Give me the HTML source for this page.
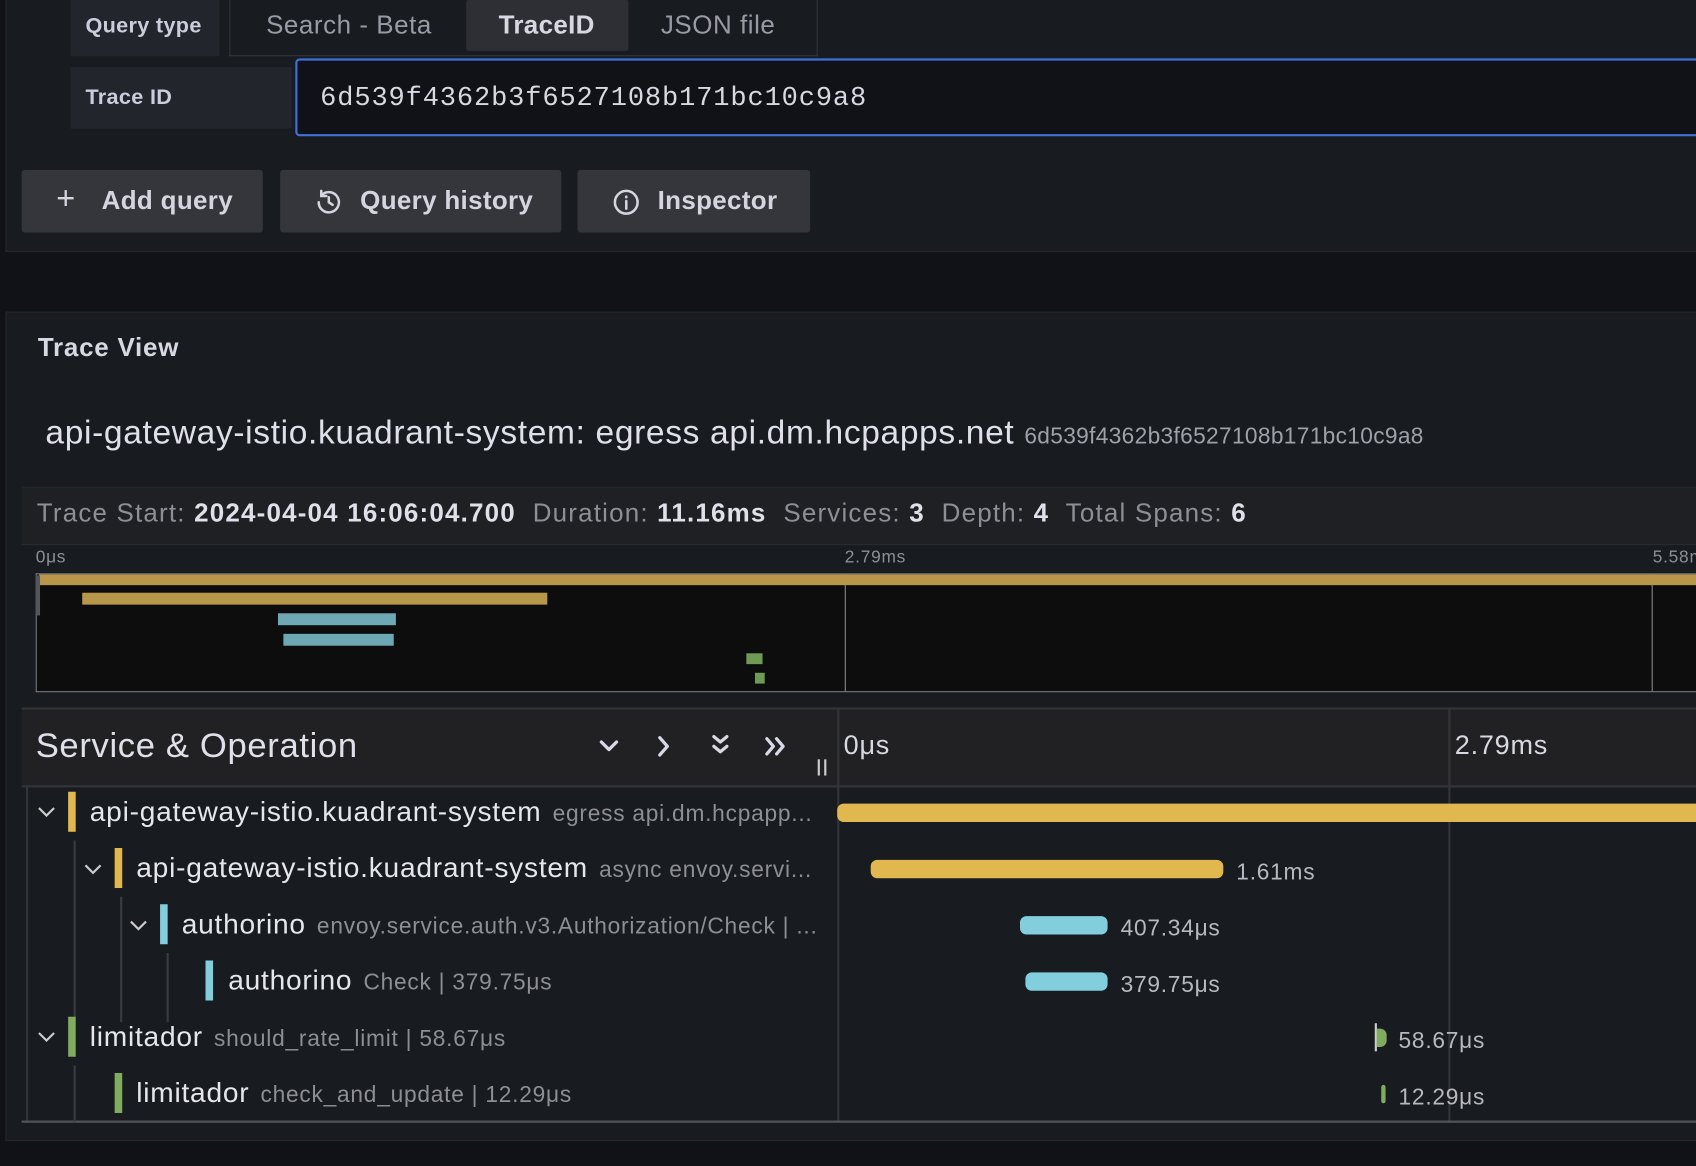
<!DOCTYPE html>
<html><head><meta charset="utf-8"><style>
html,body{margin:0;padding:0;background:#111217;width:1696px;height:1166px;overflow:hidden}
#s{position:absolute;left:0;top:0;width:1568px;height:1078px;transform:scale(1.08163);transform-origin:0 0;font-family:"Liberation Sans",Arial,sans-serif;color:#ccccdc;letter-spacing:0.7px}
.a{position:absolute;white-space:nowrap}
.lbl{background:#22252b;font-weight:bold;font-size:20px;color:#ccccdc;letter-spacing:0.3px}
.btn{background:#35363c;border-radius:3px;font-weight:bold;font-size:24px;color:#d5d5e0;height:58px;top:157px;letter-spacing:0.3px}
.g{color:#8e8e96}
.w{color:#e0e0ea;font-weight:bold}
.bar{position:absolute;border-radius:6px}
.cb{position:absolute;width:7px;height:37px}
.tl{position:absolute;width:2px;background:#3a3b40}
.svc{font-size:26px;color:#e6e6ee}
.op{font-size:21px;color:#8e8e96}
.dur{font-size:21px;color:#b8b8c0}
</style></head><body><div id="s">
<!-- top panel -->
<div class="a" style="left:5px;top:-2px;width:1563px;height:234px;background:#181b1f;border:1px solid #25272c;border-top:none;border-right:none"></div>
<div class="a lbl" style="left:65px;top:0;width:138px;height:52px;line-height:48px;text-indent:14px">Query type</div>
<div class="a" style="left:212px;top:-2px;width:542px;height:53px;border:1px solid #33353a;border-top:none"></div>
<div class="a" style="left:246px;top:0;font-size:24px;line-height:48px;color:#9a9aa6;letter-spacing:0.5px">Search - Beta</div>
<div class="a" style="left:431px;top:0;width:150px;height:47px;background:#2d2f35;border-radius:2px"></div>
<div class="a" style="left:461px;top:0;font-size:24px;line-height:48px;font-weight:bold;color:#d8d8e2;letter-spacing:0.3px">TraceID</div>
<div class="a" style="left:611px;top:0;font-size:24px;line-height:48px;color:#9a9aa6;letter-spacing:0.5px">JSON file</div>
<div class="a lbl" style="left:65px;top:62px;width:205px;height:57px;line-height:57px;text-indent:14px">Trace ID</div>
<div class="a" style="left:273px;top:54px;width:1300px;height:68px;border:2px solid #3d71d9;border-radius:4px;background:#111217;box-shadow:inset 0 0 0 2px #111217"></div>
<div class="a" style="left:296px;top:74px;font-family:'Liberation Mono',monospace;font-size:25px;line-height:34px;color:#d8d8e2;letter-spacing:0.8px">6d539f4362b3f6527108b171bc10c9a8</div>
<div class="a btn" style="left:20px;width:223px"><span class="a" style="left:32px;top:10px;font-weight:normal;font-size:30px">+</span><span class="a" style="left:74px;top:15px">Add query</span></div>
<div class="a btn" style="left:259px;width:260px"><svg class="a" style="left:31px;top:16px" width="28" height="28" viewBox="0 0 24 24" fill="none" stroke="#d5d5e0" stroke-width="2" stroke-linecap="round"><path d="M4 12a8 8 0 1 0 2.5-5.8"/><path d="M6 3v4h4"/><path d="M12 8v4l3 2"/></svg><span class="a" style="left:74px;top:15px">Query history</span></div>
<div class="a btn" style="left:534px;width:215px"><svg class="a" style="left:31px;top:16px" width="28" height="28" viewBox="0 0 24 24" fill="none" stroke="#d5d5e0" stroke-width="2" stroke-linecap="round"><circle cx="12" cy="12" r="9"/><path d="M12 11v6"/><path d="M12 7.5v.5"/></svg><span class="a" style="left:74px;top:15px">Inspector</span></div>

<!-- trace panel -->
<div class="a" style="left:5px;top:288px;width:1563px;height:765px;background:#181b1f;border:1px solid #25272c;border-right:none"></div>
<div class="a" style="left:35px;top:308px;font-size:24px;font-weight:bold;color:#d8d8e2">Trace View</div>
<div class="a" style="left:42px;top:382px;font-size:31px;color:#e0e0ea;letter-spacing:0.6px">api-gateway-istio.kuadrant-system: egress api.dm.hcpapps.net <span style="font-size:21px;color:#a0a0aa;letter-spacing:0.3px">6d539f4362b3f6527108b171bc10c9a8</span></div>
<div class="a" style="left:20px;top:450px;width:1548px;height:52px;background:#1f2024;border-top:1px solid #25272c;border-bottom:1px solid #2a2b30"></div>
<div class="a g" style="left:34px;top:461px;font-size:24px;letter-spacing:1.1px">Trace Start: <span class="w">2024-04-04 16:06:04.700</span>&nbsp; Duration: <span class="w">11.16ms</span>&nbsp; Services: <span class="w">3</span>&nbsp; Depth: <span class="w">4</span>&nbsp; Total Spans: <span class="w">6</span></div>
<div class="a g" style="left:33px;top:507px;font-size:16px">0μs</div>
<div class="a g" style="left:781px;top:507px;font-size:16px">2.79ms</div>
<div class="a g" style="left:1528px;top:507px;font-size:16px">5.58ms</div>
<div class="a" style="left:33px;top:530px;width:1535px;height:108px;background:#0d0d0e;border:1px solid #7a7b80;border-right:none"></div>
<div class="a" style="left:781px;top:531px;width:1px;height:108px;background:#8a8b90"></div>
<div class="a" style="left:1527px;top:531px;width:1px;height:108px;background:#8a8b90"></div>
<div class="a" style="left:36px;top:531px;width:1532px;height:10px;background:#b8974a"></div>
<div class="a" style="left:33px;top:532px;width:4px;height:37px;background:#55565b"></div>
<div class="a" style="left:76px;top:548px;width:430px;height:11px;background:#b8974a"></div>
<div class="a" style="left:257px;top:567px;width:109px;height:11px;background:#6ea8b4"></div>
<div class="a" style="left:262px;top:586px;width:102px;height:11px;background:#6ea8b4"></div>
<div class="a" style="left:690px;top:604px;width:15px;height:10px;background:#6f9a55"></div>
<div class="a" style="left:698px;top:622px;width:9px;height:10px;background:#6f9a55"></div>

<!-- table header -->
<div class="a" style="left:20px;top:654px;width:1548px;height:70px;background:#212124;border-top:2px solid #33343a;border-bottom:2px solid #33343a"></div>
<div class="a" style="left:33px;top:671px;font-size:32px;color:#e0e0ea;letter-spacing:0.6px">Service &amp; Operation</div>
<svg class="a" style="left:550px;top:676px" width="190" height="30" viewBox="0 0 190 30" fill="none" stroke="#d8d8e6" stroke-width="3" stroke-linecap="round" stroke-linejoin="round">
<path d="M6 10l7 7 7-7"/><path d="M60 6l7 8-7 8"/><path d="M110 5l6 5 6-5M110 14l6 5 6-5"/><path d="M159 7l6 7-6 7M168 7l6 7-6 7"/></svg>
<div class="a" style="left:756px;top:702px;width:2px;height:15px;background:#ccc"></div>
<div class="a" style="left:762px;top:702px;width:2px;height:15px;background:#ccc"></div>
<div class="a" style="left:774px;top:656px;width:2px;height:382px;background:#33343a"></div>
<div class="a" style="left:1339px;top:656px;width:2px;height:382px;background:#33343a"></div>
<div class="a" style="left:780px;top:675px;font-size:25px;color:#d8d8e2">0μs</div>
<div class="a" style="left:1345px;top:675px;font-size:25px;color:#d8d8e2">2.79ms</div>
<div class="a" style="left:20px;top:1036px;width:1548px;height:2px;background:#55565b"></div>
<div class="a" style="left:24px;top:726px;width:2px;height:310px;background:#33343a"></div>

<!-- rows -->
<svg class="a" style="left:34px;top:744px" width="18" height="14" viewBox="0 0 18 14" fill="none" stroke="#ccc" stroke-width="2"><path d="M2 3l7 7 7-7"/></svg>
<div class="cb" style="left:63px;top:732px;background:#e0b84f"></div>
<div class="a" style="left:83px;top:735px"><span class="svc">api-gateway-istio.kuadrant-system</span>&nbsp; <span class="op">egress api.dm.hcpapp...</span></div>
<div class="bar" style="left:774px;top:743px;width:800px;height:17px;background:#e0b84f;border-radius:6px 0 0 6px"></div>

<div class="tl" style="left:68px;top:777px;height:168px"></div>
<svg class="a" style="left:77px;top:797px" width="18" height="14" viewBox="0 0 18 14" fill="none" stroke="#ccc" stroke-width="2"><path d="M2 3l7 7 7-7"/></svg>
<div class="cb" style="left:106px;top:784px;background:#e0b84f"></div>
<div class="a" style="left:126px;top:787px"><span class="svc">api-gateway-istio.kuadrant-system</span>&nbsp; <span class="op">async envoy.servi...</span></div>
<div class="bar" style="left:805px;top:795px;width:326px;height:17px;background:#e0b84f"></div>
<div class="a dur" style="left:1143px;top:795px">1.61ms</div>

<div class="tl" style="left:111px;top:829px;height:116px"></div>
<svg class="a" style="left:119px;top:849px" width="18" height="14" viewBox="0 0 18 14" fill="none" stroke="#ccc" stroke-width="2"><path d="M2 3l7 7 7-7"/></svg>
<div class="cb" style="left:148px;top:836px;background:#82cedc"></div>
<div class="a" style="left:168px;top:839px"><span class="svc">authorino</span>&nbsp; <span class="op">envoy.service.auth.v3.Authorization/Check | ...</span></div>
<div class="bar" style="left:943px;top:847px;width:81px;height:17px;background:#82cedc"></div>
<div class="a dur" style="left:1036px;top:847px">407.34μs</div>

<div class="tl" style="left:154px;top:881px;height:64px"></div>
<div class="cb" style="left:190px;top:888px;background:#82cedc"></div>
<div class="a" style="left:211px;top:891px"><span class="svc">authorino</span>&nbsp; <span class="op">Check | 379.75μs</span></div>
<div class="bar" style="left:948px;top:899px;width:76px;height:17px;background:#82cedc"></div>
<div class="a dur" style="left:1036px;top:899px">379.75μs</div>

<svg class="a" style="left:34px;top:952px" width="18" height="14" viewBox="0 0 18 14" fill="none" stroke="#ccc" stroke-width="2"><path d="M2 3l7 7 7-7"/></svg>
<div class="cb" style="left:63px;top:940px;background:#7fac5f"></div>
<div class="a" style="left:83px;top:943px"><span class="svc">limitador</span>&nbsp; <span class="op">should_rate_limit | 58.67μs</span></div>
<div class="a" style="left:1271px;top:946px;width:2px;height:26px;background:#ccc"></div>
<div class="bar" style="left:1273px;top:951px;width:9px;height:17px;background:#7fac5f;border-radius:0 6px 6px 0"></div>
<div class="a dur" style="left:1293px;top:951px">58.67μs</div>

<div class="tl" style="left:68px;top:985px;height:52px"></div>
<div class="cb" style="left:106px;top:992px;background:#7fac5f"></div>
<div class="a" style="left:126px;top:995px"><span class="svc">limitador</span>&nbsp; <span class="op">check_and_update | 12.29μs</span></div>
<div class="bar" style="left:1277px;top:1003px;width:4px;height:17px;background:#7fac5f;border-radius:2px"></div>
<div class="a dur" style="left:1293px;top:1003px">12.29μs</div>
</div></body></html>
